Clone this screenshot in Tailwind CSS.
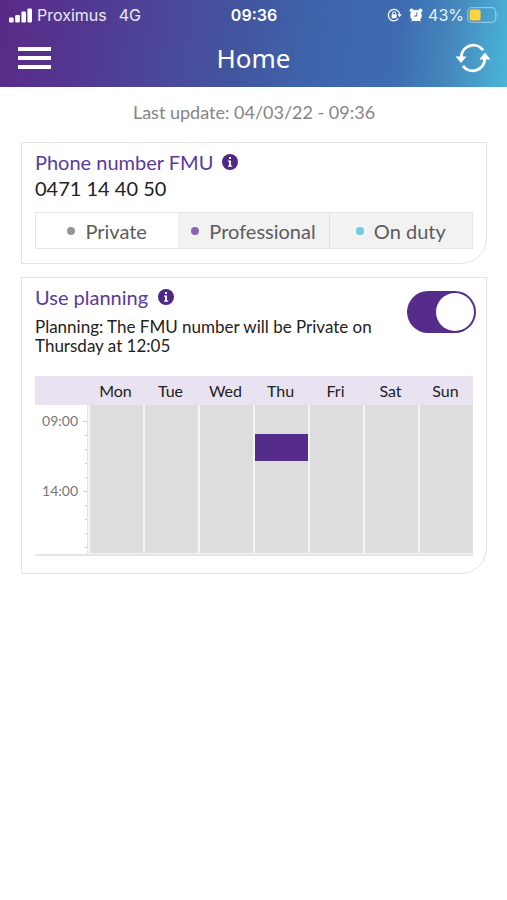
<!DOCTYPE html>
<html lang="en">
<head>
<meta charset="utf-8">
<meta name="viewport" content="width=device-width, initial-scale=1">
<title>Home</title>
<script src="https://cdn.jsdelivr.net/npm/@tailwindcss/browser@4"></script>
</head>
<body class="min-h-screen bg-white font-['Lato','Noto_Sans',sans-serif] text-[#222]">
<div class="bg-[linear-gradient(97deg,#5a2a88_0%,#523790_16%,#4a4a9b_35%,#41569f_48%,#3f63aa_60%,#3e6cb0_78%,#4487bd_88%,#4bb5d8_100%)] text-white">
  <div class="grid h-[30px] grid-cols-[1fr_auto_1fr] items-center pr-[8px] pl-[9px] font-['Inter',sans-serif] text-[16px] leading-[20px]">
    <div class="flex items-center gap-[5px] text-white/90">
      <svg class="h-[15px] w-[23px]" viewBox="0 0 23 15" fill="#fff" aria-hidden="true"><rect x="0" y="9.500" width="4.600" height="5" rx="1.200"/><rect x="6.200" y="7" width="4.600" height="7.500" rx="1.200"/><rect x="12.400" y="3.500" width="4.600" height="11" rx="1.200"/><rect x="18.400" y="0.500" width="4.600" height="14" rx="1.200"/></svg>
      <span>Proximus</span>
      <span class="pl-[7px]">4G</span>
    </div>
    <time class="font-semibold">09:36</time>
    <div class="flex items-center justify-end text-white/90">
      <svg class="mr-[7px] h-[14px] w-[15px]" viewBox="0 0 15 14" fill="none" stroke="#fff" aria-hidden="true"><path d="M11.500 10.700A5.700 5.700 0 1 1 12.700 6.500" stroke-width="1.300"/><path d="M10.400 6.200h4.400l-2.200 3z" fill="#fff" stroke="none"/><rect x="4.600" y="6.200" width="5" height="4" rx=".6" fill="#fff" stroke="none"/><path d="M5.600 6.500V5.200a1.500 1.500 0 0 1 3 0v1.300" stroke-width="1"/></svg>
      <svg class="mr-[5px] h-[14px] w-[14px]" viewBox="0 0 14 14" aria-hidden="true"><g fill="#fff"><circle cx="7" cy="7.500" r="5.800"/><circle cx="2.600" cy="2.600" r="2"/><circle cx="11.400" cy="2.600" r="2"/><path d="M2 13.800l1.500-3 2 1.500zM12 13.800l-1.500-3-2 1.500z"/></g><path d="M7.800 4.500V8H5" fill="none" stroke="#416cb0" stroke-width="1"/></svg>
      <span>43%</span>
      <svg class="ml-[3px] h-[16px] w-[32px]" viewBox="0 0 32 16" aria-hidden="true"><rect x=".7" y=".7" width="28" height="14.600" rx="4" fill="none" stroke="#fff" stroke-opacity=".4" stroke-width="1.300"/><path d="M30.300 5.500q1.700 2.500 0 5z" fill="#fff" fill-opacity=".5"/><rect x="2.600" y="2.600" width="11" height="10.800" rx="2" fill="#fcd43c"/></svg>
    </div>
  </div>
  <header class="grid h-[57px] grid-cols-[1fr_auto_1fr] items-center px-[16px] pb-[2px]">
    <button type="button" aria-label="Menu" class="flex w-[37px] flex-col gap-[5px] px-[2px]"><span class="h-[4px] bg-white"></span><span class="h-[4px] bg-white"></span><span class="h-[4px] bg-white"></span></button>
    <h1 class="font-['Noto_Sans',sans-serif] text-[26px] leading-[32px]">Home</h1>
    <button type="button" aria-label="Refresh" class="justify-self-end">
      <svg class="h-[30px] w-[36px]" viewBox="0 0 36 30" fill="none" stroke="#fff" stroke-width="3" aria-hidden="true"><path d="M6.300 14.500A12 12 0 0 1 28 7.200"/><path d="M29.700 15.500A12 12 0 0 1 8 22.800"/><path d="M.5 13.500h11L6 20z" fill="#fff" stroke="none"/><path d="M24.300 16.500h11.200L30 9.500z" fill="#fff" stroke="none"/></svg>
    </button>
  </header>
</div>

<main class="flex flex-col pr-[20px] pl-[21px] pt-[15px]">
  <p class="text-center text-[18px] leading-[20px] text-[#858585]">Last update: 04/03/22 - 09:36</p>

  <section class="mt-[20px] rounded-br-[26px] border border-[#e2e2e2] px-[13px] pt-[6px] pb-[14px]">
    <h2 class="flex items-center gap-[9px] text-[20px] leading-[26px] text-[#5a3a9c]">Phone number FMU
      <button type="button" aria-label="About the phone number"><svg class="h-[16px] w-[16px]" viewBox="0 0 16 16" aria-hidden="true"><circle cx="8" cy="8" r="8" fill="#4f2887"/><path d="M6 6.500h3v5h1.200v1.300H6v-1.300h1.100V7.800H6zM7 3.100h2v2H7z" fill="#fff"/></svg></button>
    </h2>
    <p class="text-[20px] leading-[26px]">0471 14 40 50</p>
    <div class="mt-[11px] grid h-[37px] grid-cols-[143fr_151fr_144fr] border border-[#e6e6e6] text-[20px] leading-[26px] text-[#5c5c5c]">
      <button type="button" aria-pressed="true" class="flex items-center justify-center gap-[10px] bg-white"><span class="size-[8px] rounded-full bg-[#969696]"></span>Private</button>
      <button type="button" aria-pressed="false" class="flex items-center justify-center gap-[10px] bg-[#f2f2f2]"><span class="size-[8px] rounded-full bg-[#8865b4]"></span>Professional</button>
      <button type="button" aria-pressed="false" class="flex items-center justify-center gap-[10px] border-l border-[#e2e2e2] bg-[#f2f2f2]"><span class="size-[8px] rounded-full bg-[#6cc9de]"></span>On duty</button>
    </div>
  </section>

  <section class="mt-[13px] rounded-br-[26px] border border-[#e2e2e2] px-[13px] pt-[6px] pb-[17px]">
    <div class="flex items-start justify-between">
      <div class="flex-1">
        <h2 class="flex items-center gap-[10px] text-[20px] leading-[26px] text-[#5a3a9c]"><label for="planning">Use planning</label>
          <button type="button" aria-label="About planning"><svg class="h-[16px] w-[16px]" viewBox="0 0 16 16" aria-hidden="true"><circle cx="8" cy="8" r="8" fill="#4f2887"/><path d="M6 6.500h3v5h1.200v1.300H6v-1.300h1.100V7.800H6zM7 3.100h2v2H7z" fill="#fff"/></svg></button>
        </h2>
        <p class="mt-[7px] text-[17px] leading-[19px]">Planning: The FMU number will be Private on Thursday at 12:05</p>
      </div>
      <input id="planning" type="checkbox" checked class="mt-[7px] -mr-[3px] ml-[12px] flex h-[42px] w-[69px] shrink-0 appearance-none items-center rounded-full bg-[#552c8a] px-[2px] before:size-[38px] before:rounded-full before:bg-white checked:justify-end">
    </div>
    <table class="mt-[21px] w-full table-fixed border-separate border-spacing-0 border-b-2 border-[#e4e4e4]">
      <thead>
        <tr class="h-[29px] bg-[#e9e3f1] text-[16px] leading-[20px]">
          <th scope="col" class="w-[53px]" aria-label="Time"></th>
          <th scope="col" class="font-normal">Mon</th><th scope="col" class="font-normal">Tue</th><th scope="col" class="font-normal">Wed</th><th scope="col" class="font-normal">Thu</th><th scope="col" class="font-normal">Fri</th><th scope="col" class="font-normal">Sat</th><th scope="col" class="font-normal">Sun</th>
        </tr>
      </thead>
      <tbody>
        <tr class="align-top">
          <td class="border-r border-[#e4e4e4] p-0 pt-[9px] text-[14px] text-[#777]">
            <ul class="leading-[14px]">
              <li class="flex h-[14px] items-center justify-end gap-[5px]">09:00<span class="h-px w-[4px] bg-[#ccc]"></span></li>
              <li class="flex h-[14px] items-center justify-end"><span class="h-px w-[2px] bg-[#ccc]"></span></li>
              <li class="flex h-[14px] items-center justify-end"><span class="h-px w-[2px] bg-[#ccc]"></span></li>
              <li class="flex h-[14px] items-center justify-end"><span class="h-px w-[2px] bg-[#ccc]"></span></li>
              <li class="flex h-[14px] items-center justify-end"><span class="h-px w-[2px] bg-[#ccc]"></span></li>
              <li class="flex h-[14px] items-center justify-end gap-[5px]">14:00<span class="h-px w-[4px] bg-[#ccc]"></span></li>
              <li class="flex h-[14px] items-center justify-end"><span class="h-px w-[2px] bg-[#ccc]"></span></li>
              <li class="flex h-[14px] items-center justify-end"><span class="h-px w-[2px] bg-[#ccc]"></span></li>
              <li class="flex h-[14px] items-center justify-end"><span class="h-px w-[2px] bg-[#ccc]"></span></li>
              <li class="flex h-[14px] items-center justify-end"><span class="h-px w-[2px] bg-[#ccc]"></span></li>
            </ul>
          </td>
          <td class="border-b border-l-2 border-[#f4f4f4] bg-[#ddd] p-0"></td>
          <td class="border-b border-l-2 border-[#f4f4f4] bg-[#ddd] p-0"></td>
          <td class="border-b border-l-2 border-[#f4f4f4] bg-[#ddd] p-0"></td>
          <td class="border-b border-l-2 border-[#f4f4f4] bg-[#ddd] p-0 pt-[29px]"><div class="h-[27px] bg-[#552c8a]"></div></td>
          <td class="border-b border-l-2 border-[#f4f4f4] bg-[#ddd] p-0"></td>
          <td class="border-b border-l-2 border-[#f4f4f4] bg-[#ddd] p-0"></td>
          <td class="border-b border-l-2 border-[#f4f4f4] bg-[#ddd] p-0"></td>
        </tr>
      </tbody>
    </table>
  </section>
</main>
</body>
</html>
